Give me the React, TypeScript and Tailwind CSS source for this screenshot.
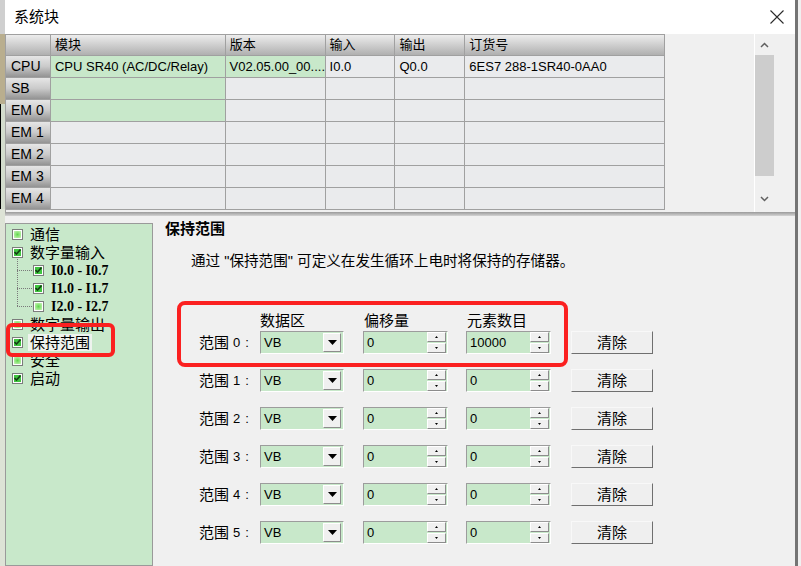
import React from 'react'

const cols = [
  { w: 'w-[175px]', label: '模块' },
  { w: 'w-[100px]', label: '版本' },
  { w: 'w-[70px]', label: '输入' },
  { w: 'w-[70px]', label: '输出' },
  { w: 'w-[200px]', label: '订货号' },
]

const rows = [
  { name: 'CPU', cells: ['CPU SR40 (AC/DC/Relay)', 'V02.05.00_00....', 'I0.0', 'Q0.0', '6ES7 288-1SR40-0AA0'], green: 2 },
  { name: 'SB', cells: ['', '', '', '', ''], green: 1 },
  { name: 'EM 0', cells: ['', '', '', '', ''], green: 1 },
  { name: 'EM 1', cells: ['', '', '', '', ''], green: 0 },
  { name: 'EM 2', cells: ['', '', '', '', ''], green: 0 },
  { name: 'EM 3', cells: ['', '', '', '', ''], green: 0 },
  { name: 'EM 4', cells: ['', '', '', '', ''], green: 0 },
]

const ranges = [
  { n: '0', offset: '0', count: '10000' },
  { n: '1', offset: '0', count: '0' },
  { n: '2', offset: '0', count: '0' },
  { n: '3', offset: '0', count: '0' },
  { n: '4', offset: '0', count: '0' },
  { n: '5', offset: '0', count: '0' },
]

function Check({ checked }: { checked?: boolean }) {
  return (
    <div className="flex h-[11px] w-[11px] shrink-0 items-center justify-center border border-[#7c7c7c] bg-white p-[1px]">
      <div
        className={
          checked
            ? 'flex h-full w-full items-center justify-center bg-[#3fc43f]'
            : 'h-full w-full bg-radial from-[#5fd84a] to-[#c9f3b8]'
        }
      >
        {checked && (
          <svg width="7" height="6" viewBox="0 0 7 6">
            <path d="M0.5 3l2 2 4-4.5" fill="none" stroke="#143d14" strokeWidth="1.6" />
          </svg>
        )}
      </div>
    </div>
  )
}

function TreeItem({ label, checked, selected }: { label: string; checked?: boolean; selected?: boolean }) {
  return (
    <div className="flex h-[18px] items-center pl-[6px]">
      <Check checked={checked} />
      <span
        className={
          selected
            ? 'ml-[5px] bg-[#eef3ee] px-[2px] text-[15px] leading-[17px]'
            : 'ml-[7px] text-[15px] leading-[17px]'
        }
      >
        {label}
      </span>
    </div>
  )
}

function SubItem({ label, checked }: { label: string; checked?: boolean }) {
  return (
    <div className="flex h-[18px] items-center pl-[11px]">
      <div className="w-[15px] border-t border-dotted border-[#7a7a7a]" />
      <div className="ml-[1px]">
        <Check checked={checked} />
      </div>
      <span className="ml-[7px] font-['Liberation_Serif',serif] text-[14px] font-bold leading-[17px]">{label}</span>
    </div>
  )
}

function Combo() {
  return (
    <div className="flex h-[23px] w-[84px] items-center border border-t-[#9c9c9c] border-l-[#9c9c9c] border-r-white border-b-white bg-[#c8e8ca]">
      <span className="flex-1 pl-[3px] text-[13px] leading-none">VB</span>
      <div className="mr-[2px] flex h-[19px] w-[18px] items-center justify-center border border-t-white border-l-white border-r-[#8c8c8c] border-b-[#8c8c8c] bg-[#f0f0f0]">
        <svg width="9" height="5" viewBox="0 0 9 5">
          <path d="M0 0h9L4.5 5z" fill="#000" />
        </svg>
      </div>
    </div>
  )
}

function Spin({ value }: { value: string }) {
  return (
    <div className="flex h-[23px] w-[85px] items-center border border-t-[#9c9c9c] border-l-[#9c9c9c] border-r-white border-b-white bg-[#c8e8ca]">
      <span className="flex-1 pl-[3px] text-[13px] leading-none">{value}</span>
      <div className="mr-[1px] flex h-[21px] w-[19px] flex-col">
        <div className="flex h-[10px] items-center justify-center border border-t-white border-l-white border-r-[#8c8c8c] border-b-[#8c8c8c] bg-[#f0f0f0]">
          <svg width="3" height="2" viewBox="0 0 3 2">
            <path d="M0 2h3L1.5 0z" fill="#000" />
          </svg>
        </div>
        <div className="mt-[1px] flex h-[10px] items-center justify-center border border-t-white border-l-white border-r-[#8c8c8c] border-b-[#8c8c8c] bg-[#f0f0f0]">
          <svg width="3" height="2" viewBox="0 0 3 2">
            <path d="M0 0h3L1.5 2z" fill="#000" />
          </svg>
        </div>
      </div>
    </div>
  )
}

export default function App() {
  return (
    <div className="relative flex h-[566px] w-[801px] overflow-hidden bg-[#f0f0f0] font-['Liberation_Sans','Noto_Sans_CJK_SC',sans-serif] text-black">
      {/* window behind */}
      <div className="flex w-[5px] shrink-0 flex-col">
        <div className="h-[34px] bg-[#cfcfcf]" />
        <div className="h-[70px] bg-[#b9ae8e]" />
        <div className="h-[105px] border-l border-black bg-[#d3dccd]" />
        <div className="flex-1 bg-[#dde3d6]" />
      </div>

      <div className="flex w-[793px] shrink-0 flex-col border-r-[3px] border-[#747474]">
        {/* title bar */}
        <div className="flex h-[34px] shrink-0 items-center justify-between bg-white pl-[9px] pr-[11px]">
          <span className="text-[15px]">系统块</span>
          <svg width="14" height="14" viewBox="0 0 14 14">
            <path d="M0.5 0.5l13 13M13.5 0.5l-13 13" stroke="#2b2b2b" strokeWidth="1.1" />
          </svg>
        </div>

        {/* module table */}
        <div className="flex h-[178px] shrink-0">
          <div className="w-[660px] border-l border-t border-[#a0a0a0]">
            <div className="flex h-[21px] bg-linear-to-b from-[#ededed] to-[#adadad]">
              <div className="w-[45px] border-r border-b border-[#a0a0a0]" />
              {cols.map(c => (
                <div key={c.label} className={`${c.w} flex items-center border-r border-b border-[#a0a0a0] pl-[4px] text-[13px]`}>
                  {c.label}
                </div>
              ))}
            </div>
            {rows.map(r => (
              <div key={r.name} className="flex h-[22px]">
                <div className="flex w-[45px] items-center border-r border-b border-[#a0a0a0] bg-linear-to-b from-[#e6e6e6] via-[#cacaca] to-[#939393] pl-[5px] text-[14px]">
                  {r.name}
                </div>
                {cols.map((c, i) => (
                  <div
                    key={c.label}
                    className={`${c.w} flex items-center border-r border-b border-[#a0a0a0] pl-[4px] text-[13px] ${
                      i < r.green ? 'bg-[#c8e8ca]' : 'bg-[#eaebed]'
                    }`}
                  >
                    {r.cells[i]}
                  </div>
                ))}
              </div>
            ))}
          </div>
          <div className="w-[89px]" />
          {/* scrollbar */}
          <div className="flex w-[20px] flex-col border-l border-white">
            <div className="flex h-[21px] items-center justify-center">
              <svg width="9" height="6" viewBox="0 0 9 6">
                <path d="M1 5l3.5-3.5L8 5" fill="none" stroke="#606060" strokeWidth="1.5" />
              </svg>
            </div>
            <div className="h-[121px] bg-[#cdcdcd]" />
            <div className="flex-1" />
            <div className="mb-[3px] flex h-[20px] items-center justify-center">
              <svg width="9" height="6" viewBox="0 0 9 6">
                <path d="M1 1l3.5 3.5L8 1" fill="none" stroke="#606060" strokeWidth="1.5" />
              </svg>
            </div>
          </div>
          <div className="flex-1" />
        </div>

        {/* splitter */}
        <div className="h-[4px] shrink-0 bg-linear-to-b from-[#9a9a9a] to-[#d4d4d4]" />

        {/* bottom pane */}
        <div className="flex flex-1">
          {/* tree */}
          <div className="mt-[7px] w-[148px] shrink-0 border border-[#9a9a9a] bg-[#c8e8ca] pt-[1px]">
            <TreeItem label="通信" />
            <TreeItem label="数字量输入" checked />
            <div className="relative">
              <div className="absolute left-[11px] top-[-4px] bottom-[9px] border-l border-dotted border-[#7a7a7a]" />
              <SubItem label="I0.0 - I0.7" checked />
              <SubItem label="I1.0 - I1.7" checked />
              <SubItem label="I2.0 - I2.7" />
            </div>
            <TreeItem label="数字量输出" />
            <TreeItem label="保持范围" checked selected />
            <TreeItem label="安全" />
            <TreeItem label="启动" checked />
          </div>

          {/* content */}
          <div className="flex flex-1 flex-col">
            <div className="pl-[12px] pt-[4px] text-[15px] font-bold leading-[18px]">保持范围</div>
            <div className="mt-[14px] pl-[38px] text-[14.6px] leading-[18px]">
              通过 "保持范围" 可定义在发生循环上电时将保持的存储器。
            </div>

            <div className="mt-[42px] flex h-[18px] items-center pl-[46px] text-[15px] leading-[18px]">
              <span className="ml-[61px] w-[104px]">数据区</span>
              <span className="w-[103px]">偏移量</span>
              <span>元素数目</span>
            </div>

            <div className="mt-[1px] flex flex-col gap-[15px] pl-[46px]">
              {ranges.map(r => (
                <div key={r.n} className="flex h-[23px] items-center">
                  <div className="flex w-[61px] items-center">
                    <span className="text-[15px] leading-none">范围</span>
                    <span className="ml-[4px] text-[13px] leading-none">{r.n}</span>
                    <span className="ml-[5px] text-[13px] leading-none">:</span>
                  </div>
                  <Combo />
                  <div className="ml-[19px]">
                    <Spin value={r.offset} />
                  </div>
                  <div className="ml-[18px]">
                    <Spin value={r.count} />
                  </div>
                  <button className="ml-[20px] flex h-[23px] w-[82px] items-center justify-center border border-t-[#f8f8f8] border-l-[#f8f8f8] border-r-[#6f6f6f] border-b-[#6f6f6f] bg-[#efefef] text-[15px] leading-none">
                    清除
                  </button>
                </div>
              ))}
            </div>
          </div>
        </div>
      </div>

      {/* annotation boxes */}
      <div className="absolute left-[6px] top-[323px] h-[34px] w-[109px] rounded-[6px] border-[4px] border-[#fb2020]" />
      <div className="absolute left-[177px] top-[301px] h-[66px] w-[391px] rounded-[8px] border-[4px] border-[#fb2020]" />
    </div>
  )
}
